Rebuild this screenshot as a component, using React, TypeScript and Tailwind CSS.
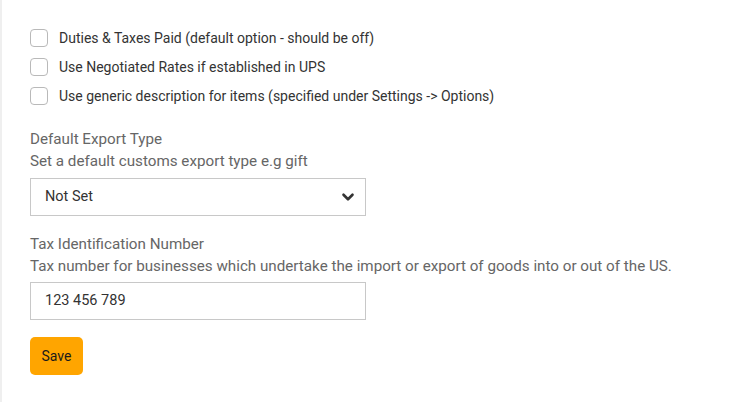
import { ChevronDown } from "lucide-react";

const checks = [
  "Duties & Taxes Paid (default option - should be off)",
  "Use Negotiated Rates if established in UPS",
  "Use generic description for items (specified under Settings -> Options)",
];

export default function App() {
  return (
    <div className="h-[402px] w-[737px] bg-white border-l-2 border-[#efefef] pl-[28px] pt-[29px] font-['Roboto',sans-serif]">
      <div className="flex flex-col gap-[11px]">
        {checks.map((c) => (
          <label key={c} className="flex items-center gap-[11px] h-[18px] text-[14px] text-[#333]">
            <span className="w-[18px] h-[18px] rounded-[4px] border border-[#b9b9b9] bg-white shrink-0" />
            {c}
          </label>
        ))}
      </div>

      <div className="mt-[23px] text-[15.2px] text-[#666] leading-[22px]">Default Export Type</div>
      <div className="text-[15.2px] text-[#666] leading-[22px]">Set a default customs export type e.g gift</div>
      <div className="mt-[6px] w-[336px] h-[38px] border border-[#c8c8c8] flex items-center justify-between pl-[14px] pr-[8px] text-[14.5px] text-[#333]">
        <span>Not Set</span>
        <ChevronDown size={18} strokeWidth={3.5} className="text-[#333]" />
      </div>

      <div className="mt-[17px] text-[15.2px] text-[#666] leading-[22px]">Tax Identification Number</div>
      <div className="text-[15.2px] text-[#666] leading-[22px]">Tax number for businesses which undertake the import or export of goods into or out of the US.</div>
      <div className="mt-[5px] w-[336px] h-[38px] border border-[#c8c8c8] flex items-center pl-[14px] text-[14.5px] text-[#333]">
        123 456 789
      </div>

      <button className="mt-[17px] h-[38px] w-[53px] rounded-[5px] bg-[#ffa500] text-[14px] text-[#1a1a1a]">Save</button>
    </div>
  );
}
